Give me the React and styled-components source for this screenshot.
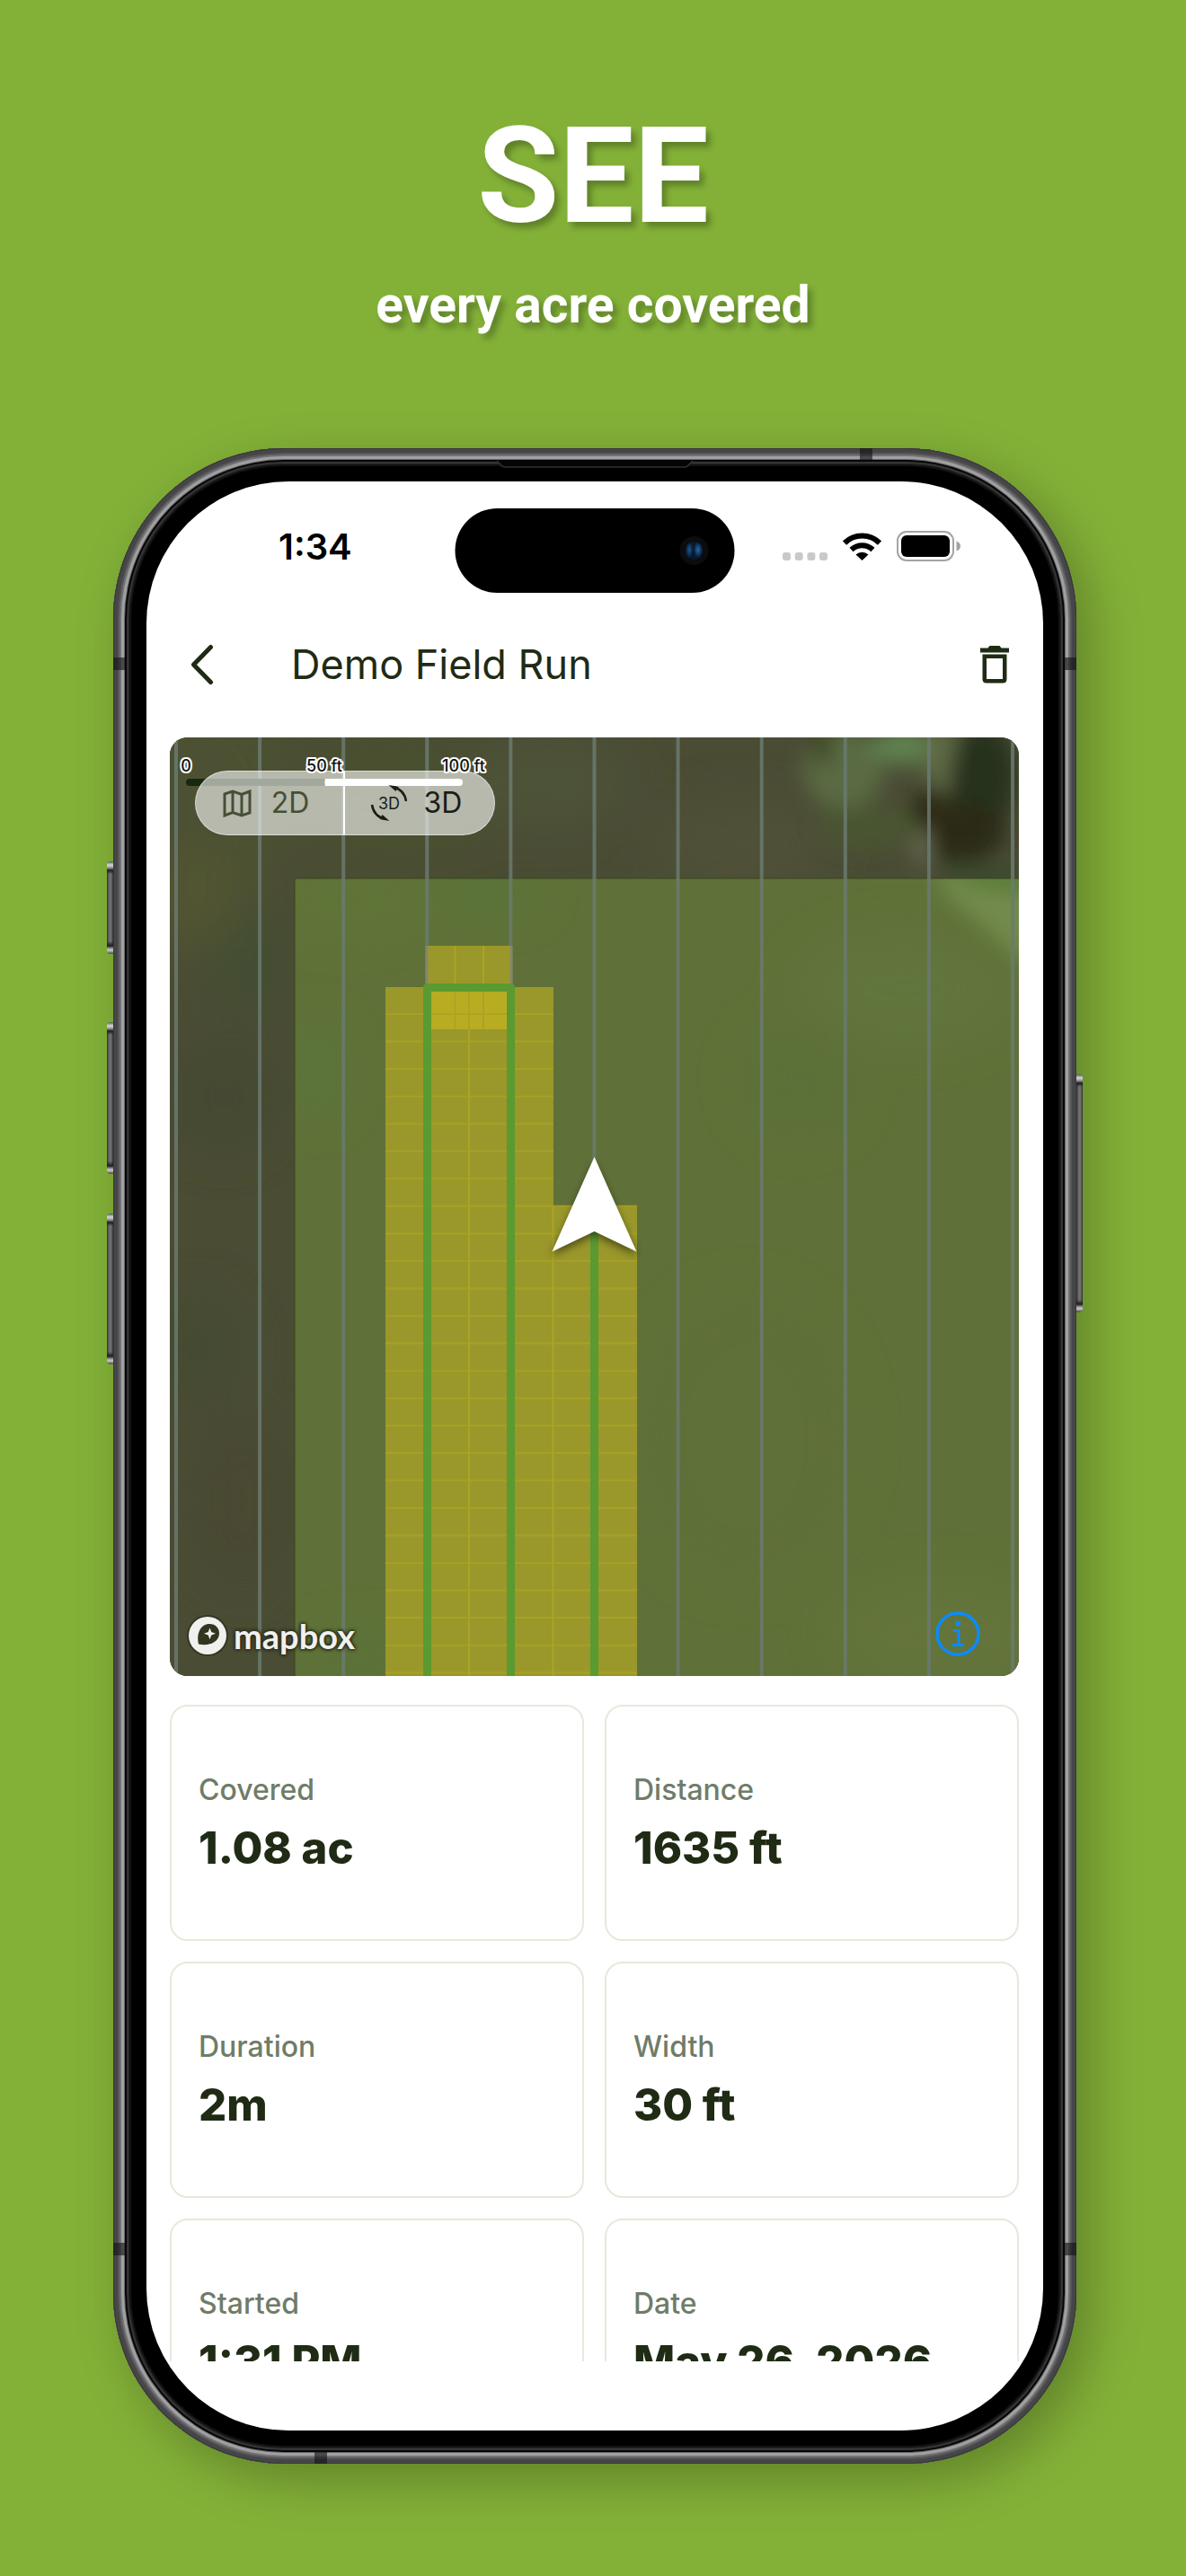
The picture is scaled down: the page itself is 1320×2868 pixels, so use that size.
import React from 'react';
import styled, { createGlobalStyle } from 'styled-components';

const INK = '#1f2b14';
const UI_FONT = "Inter, 'Liberation Sans', sans-serif";

const GlobalStyle = createGlobalStyle`
  *, *::before, *::after { box-sizing: border-box; }
  body { margin: 0; background: #83b138; }
  button { font: inherit; color: inherit; border: 0; padding: 0; background: none; cursor: pointer; }
  svg { display: block; }
`;

const Page = styled.main`
  min-height: 100vh;
  display: flex;
  flex-direction: column;
  background: #83b138;
  overflow: hidden;
  font-family: ${UI_FONT};
`;

const Hero = styled.header`
  padding: 111px 24px 124px;
  text-align: center;
  color: #fff;
  font-family: Roboto, 'Liberation Sans', sans-serif;
  font-weight: 700;
  text-shadow: 5px 6px 7px rgba(0, 0, 0, 0.28);
`;

const HeroTitle = styled.h1`
  margin: 0;
  font-size: 148px;
  line-height: 172px;
  font-weight: 700;
`;

const HeroText = styled.p`
  margin: 21px 0 0;
  font-size: 57px;
  line-height: 71px;
`;

const Stage = styled.div`
  padding: 0 122px 125px 126px;
`;

const Phone = styled.div`
  position: relative;
  width: 100%;
  max-width: 1072px;
  aspect-ratio: 1072 / 2244;
  margin: 0 auto;
  padding: 37px;
  border-radius: 190px;
  background: #000;
  box-shadow:
    inset 0 0 0 1px #38383a,
    inset 0 0 0 5px #464648,
    inset 0 0 0 7px #575759,
    inset 0 0 0 9px #737375,
    inset 0 0 0 12px #a0a0a2,
    inset 0 0 0 13px #6a6a6c,
    inset 0 0 0 15px #060606,
    inset 0 0 0 17px #343434,
    inset 0 0 0 18px #242424,
    inset 0 0 0 20px #121212,
    16px 18px 56px rgba(0, 0, 0, 0.26);
`;

const SideKey = styled.span`
  position: absolute;
  ${(p) => (p.$side === 'left' ? 'left: -7px; border-radius: 4px 0 0 4px;' : 'right: -7px; border-radius: 0 4px 4px 0;')}
  top: ${(p) => p.$top}px;
  width: 7px;
  height: ${(p) => p.$length}px;
  background:
    linear-gradient(#555 0, #d8d8d8 4px, #999 7px, #1c1c1e 10px, transparent 14px, transparent calc(100% - 14px), #1c1c1e calc(100% - 9px), #999 calc(100% - 6px), #ccc calc(100% - 4px), #444 100%),
    linear-gradient(90deg, #333 0, #737375 3px, #6a6a6c 5px, #2c2c2e 7px);
`;

const Band = styled.span`
  position: absolute;
  background: rgba(20, 20, 22, 0.62);
  ${(p) => p.$edge}: 0;
  ${(p) => (p.$edge === 'top' || p.$edge === 'bottom'
    ? `left: ${p.$at}px; width: 14px; height: 13px;`
    : `top: ${p.$at}px; width: 13px; height: 14px;`)}
`;

const Earpiece = styled.svg`
  position: absolute;
  top: 13px;
  left: 50%;
  transform: translateX(-50%);
`;

const Screen = styled.div`
  position: relative;
  height: 100%;
  display: flex;
  flex-direction: column;
  overflow: hidden;
  border-radius: 158px;
  background: #fff;
  color: ${INK};
`;

const Island = styled.div`
  position: absolute;
  top: 30px;
  left: 50%;
  transform: translateX(-50%);
  width: 311px;
  height: 94px;
  display: flex;
  align-items: center;
  justify-content: flex-end;
  padding-right: 29px;
  border-radius: 47px;
  background: #000;
`;

const Lens = styled.span`
  width: 32px;
  height: 32px;
  border: 6px solid #0c0c0e;
  border-radius: 50%;
  background: radial-gradient(ellipse 5px 9px at 72% 45%, #1f6cab, transparent),
    radial-gradient(ellipse 4px 9px at 24% 45%, #1a5a94, transparent), #08182f;
`;

const StatusBar = styled.div`
  flex: none;
  height: 146px;
  display: flex;
  align-items: center;
  justify-content: space-between;
  padding: 0 92px 0 147px;
  color: #000;
`;

const Clock = styled.time`
  font-size: 40px;
  line-height: 48px;
  font-weight: 600;
`;

const StatusIcons = styled.div`
  display: flex;
  align-items: center;
  gap: 17px;
  padding-bottom: 2px;
`;

const NavBar = styled.div`
  flex: none;
  height: 115px;
  display: flex;
  align-items: center;
  padding: 0 30px 0 38px;
`;

const IconButton = styled.button`
  width: 48px;
  height: 48px;
  display: grid;
  place-items: center;
`;

const NavTitle = styled.h2`
  flex: 1;
  margin: 0 0 0 75px;
  font-size: 45px;
  line-height: 58px;
  font-weight: 400;
`;

const Scroll = styled.div`
  flex: 1;
  min-height: 0;
  overflow: hidden;
  margin-bottom: 77px;
  padding: 24px 27px 0 26px;
`;

const MapBox = styled.section`
  position: relative;
  aspect-ratio: 945 / 1045;
  overflow: hidden;
  border-radius: 20px;
  background: #4b4d34;
`;

const MapArt = styled.svg`
  width: 100%;
  height: 100%;
`;

const ViewToggle = styled.div`
  position: absolute;
  top: 37px;
  left: 28px;
  display: grid;
  grid-template-columns: 1fr 1fr;
  width: 334px;
  height: 72px;
  border: 1px solid rgba(255, 255, 255, 0.5);
  border-radius: 36px;
  background: rgba(255, 255, 255, 0.6);
`;

const ToggleButton = styled.button`
  display: flex;
  align-items: center;
  justify-content: center;
  gap: ${(p) => (p.$divided ? 22 : 18)}px;
  padding-right: 8px;
  font-size: 32px;
  line-height: 40px;
  color: ${(p) => (p.$divided ? '#454f35' : '#1b1c17')};
  border-right: ${(p) => (p.$divided ? '2px solid #fff' : '0')};
`;

const Attribution = styled.a`
  position: absolute;
  left: 18px;
  bottom: 21px;
  display: flex;
  align-items: center;
  gap: 5px;
  color: #f0f0ee;
  font: 700 38px/44px Lato, 'Liberation Sans', sans-serif;
  text-decoration: none;
  text-shadow: 0 0 3px #2c2f1c, 0 0 3px #2c2f1c, 0 0 4px #2c2f1c, 0 0 4px #2c2f1c;
`;

const InfoButton = styled.button`
  position: absolute;
  right: 43px;
  bottom: 22px;
`;

const Stats = styled.dl`
  display: grid;
  grid-template-columns: 1fr 1fr;
  grid-auto-rows: 263px;
  gap: 23px;
  margin: 32px 0 0;
`;

const Card = styled.div`
  display: flex;
  flex-direction: column;
  justify-content: center;
  gap: 12px;
  padding: 0 30px 4px;
  border: 2px solid #e4eadc;
  border-radius: 20px;
`;

const Label = styled.dt`
  font-size: 32px;
  line-height: 48px;
  font-weight: 500;
  color: #6f7c68;
`;

const Value = styled.dd`
  margin: 0;
  font-size: 49px;
  line-height: 58px;
  font-weight: 800;
  white-space: nowrap;
`;

const LINES = Array.from({ length: 11 }, (_, i) => 7 + i * 93.1);
const ROWS = Array.from({ length: 25 }, (_, i) => 308 + i * 30.55);

const stats = [
  ['Covered', '1.08 ac'],
  ['Distance', '1635 ft'],
  ['Duration', '2m'],
  ['Width', '30 ft'],
  ['Started', '1:31 PM'],
  ['Date', 'May 26, 2026'],
];

function FieldMap() {
  return (
    <MapArt viewBox="0 0 945 1045" preserveAspectRatio="xMidYMid slice" role="img" aria-label="Field coverage map">
      <defs>
        <filter id="soft" x="-50%" y="-50%" width="200%" height="200%"><feGaussianBlur stdDeviation="26" /></filter>
        <filter id="leaf" x="-50%" y="-50%" width="200%" height="200%"><feGaussianBlur stdDeviation="11" /></filter>
        <filter id="drop" x="-50%" y="-50%" width="200%" height="200%"><feGaussianBlur stdDeviation="5" /></filter>
        <clipPath id="beyond"><path d="M0 0H945V157H139V1045H0Z" /></clipPath>
        <clipPath id="field"><rect x="139" y="157" width="806" height="888" /></clipPath>
      </defs>

      <g clipPath="url(#beyond)">
        <rect width="945" height="1045" fill="#4a4c34" />
        <g filter="url(#soft)">
          <ellipse cx="30" cy="60" rx="110" ry="120" fill="#4b5130" />
          <ellipse cx="30" cy="180" rx="60" ry="60" fill="#515433" />
          <ellipse cx="250" cy="70" rx="120" ry="60" fill="#4a512f" />
          <ellipse cx="90" cy="250" rx="40" ry="60" fill="#434d33" />
          <ellipse cx="420" cy="50" rx="90" ry="50" fill="#4e5238" />
          <ellipse cx="640" cy="120" rx="100" ry="50" fill="#505138" />
          <ellipse cx="60" cy="400" rx="60" ry="60" fill="#454830" />
          <ellipse cx="30" cy="680" rx="50" ry="60" fill="#454b32" />
          <ellipse cx="80" cy="850" rx="60" ry="100" fill="#494a33" />
        </g>
        <g filter="url(#leaf)">
          <ellipse cx="750" cy="35" rx="45" ry="45" fill="#5a6b42" />
          <ellipse cx="820" cy="10" rx="40" ry="20" fill="#5f8250" />
          <ellipse cx="780" cy="100" rx="60" ry="25" fill="#485432" />
          <ellipse cx="727" cy="10" rx="10" ry="22" fill="#3b4424" />
          <ellipse cx="858" cy="20" rx="20" ry="36" fill="#5f6a44" />
          <ellipse cx="905" cy="45" rx="36" ry="60" fill="#27301a" />
          <ellipse cx="880" cy="105" rx="50" ry="34" fill="#2a2b19" />
          <ellipse cx="845" cy="80" rx="20" ry="22" fill="#2e2a17" />
          <ellipse cx="838" cy="122" rx="10" ry="22" fill="#66684f" />
          <ellipse cx="905" cy="152" rx="46" ry="10" fill="#39482b" />
        </g>
      </g>

      <g clipPath="url(#field)">
        <rect x="139" y="157" width="806" height="888" fill="#5f7138" />
        <g filter="url(#soft)">
          <ellipse cx="200" cy="180" rx="90" ry="30" fill="#617537" />
          <ellipse cx="160" cy="370" rx="30" ry="50" fill="#5a743a" />
          <ellipse cx="350" cy="170" rx="60" ry="20" fill="#597337" />
          <ellipse cx="700" cy="380" rx="60" ry="60" fill="#5b7038" />
          <ellipse cx="820" cy="280" rx="120" ry="60" fill="#62743c" />
          <ellipse cx="640" cy="780" rx="120" ry="160" fill="#5e7037" />
          <ellipse cx="860" cy="1000" rx="120" ry="60" fill="#64743b" />
          <ellipse cx="210" cy="1020" rx="60" ry="20" fill="#597238" />
        </g>
        <path filter="url(#leaf)" d="M850 150H960V260Q925 230 900 205Q865 185 850 150Z" fill="#728a4c" />
        <path filter="url(#leaf)" d="M880 150H960V172Q920 170 880 160Z" fill="#577936" />
      </g>
      <path d="M139 1045V157H945" fill="none" stroke="#38461f" strokeWidth="1" />

      <g fill="#6a7a70">
        {LINES.map((x) => <rect key={x} x={x - 2} width="4" height="1045" opacity="0.85" />)}
      </g>

      <g fill="#9a982b">
        <rect x="286" y="232" width="94" height="47" />
        <path d="M240 278H427V522H520V1045H240Z" />
      </g>
      <rect x="286" y="278" width="94" height="47" fill="#b8ac22" />
      <g stroke="#aca325" strokeWidth="2">
        <path d="M317.5 232V325M349 232V325M333 278V1045M426.500 522V1045" />
        {ROWS.map((y) => <path key={y} d={`M240 ${y}H${y < 520 ? 427 : 520}`} opacity="0.8" />)}
      </g>
      <path d="M286 232V275M380 232V275" stroke="#85876a" strokeWidth="3" />
      <g fill="none" stroke="#5a9a30" strokeWidth="9" strokeLinejoin="round">
        <path d="M286.500 1045V278.500H379.500V1045" />
        <path d="M472.500 545V1045" />
      </g>

      <g strokeLinecap="round" strokeWidth="8">
        <path d="M22 50H172" stroke="#16290f" />
        <path d="M176 50H322" stroke="#fff" />
        <path d="M172.500 50H180" stroke="#fff" strokeLinecap="butt" />
        <path d="M160 50H172.500" stroke="#16290f" strokeLinecap="butt" />
      </g>

      <path d="M472.500 474L520 577L472.500 554L425 577Z" fill="#000" opacity="0.5" filter="url(#drop)" />
      <path d="M472.500 467L519.500 572.500L472.500 550L425.500 572.500Z" fill="#fff" />
    </MapArt>
  );
}

const ScaleLabels = styled.svg`
  position: absolute;
  top: 0;
  left: 0;
  font: 500 18px Inter, 'Liberation Sans', sans-serif;
  fill: #111;
  stroke: #fff;
  stroke-width: 4px;
  stroke-linejoin: round;
  paint-order: stroke;
  text-anchor: middle;
`;

const RotationText = styled.text`
  font: 400 18px Inter, 'Liberation Sans', sans-serif;
  fill: currentColor;
  text-anchor: middle;
`;

export default function App() {
  return (
    <>
      <GlobalStyle />
      <Page>
        <Hero>
          <HeroTitle>SEE</HeroTitle>
          <HeroText>every acre covered</HeroText>
        </Hero>
        <Stage>
          <Phone>
            <SideKey $side="left" $top={460} $length={103} />
            <SideKey $side="left" $top={639} $length={169} />
            <SideKey $side="left" $top={852} $length={168} />
            <SideKey $side="right" $top={697} $length={265} />
            <Band $edge="top" $at={831} />
            <Band $edge="bottom" $at={224} />
            <Band $edge="left" $at={233} />
            <Band $edge="right" $at={233} />
            <Band $edge="left" $at={1998} />
            <Band $edge="right" $at={1998} />
            <Earpiece width="218" height="9" viewBox="0 0 218 9" aria-hidden="true">
              <path d="M0 1L3 4Q6 8 9 8H209Q212 8 215 4L218 1" fill="#050505" stroke="#303030" strokeWidth="1.500" />
            </Earpiece>
            <Screen>
              <Island><Lens /></Island>
              <StatusBar>
                <Clock>1:34</Clock>
                <StatusIcons>
                  <svg width="50" height="32" viewBox="0 0 50 32" fill="#c9c9c9" aria-hidden="true">
                    {[0, 13.700, 27.400, 41].map((x) => <rect key={x} x={x} y="23" width="9" height="9" rx="3" />)}
                  </svg>
                  <svg width="43" height="32" viewBox="0 0 43 32" aria-label="Wi-Fi" role="img">
                    <g fill="none" stroke="#000" strokeWidth="6">
                      <path d="M2 12.500A28 28 0 0 1 41 12.500" />
                      <path d="M9.500 20A17.500 17.500 0 0 1 33.500 20" />
                    </g>
                    <path d="M14.500 25.500A10.500 10.500 0 0 1 28.500 25.500L21.500 32Z" />
                  </svg>
                  <svg width="71" height="34" viewBox="0 0 71 34" aria-label="Battery full" role="img">
                    <rect x="1" y="1" width="62" height="32" rx="10" fill="none" stroke="#a4a4a4" strokeWidth="2" />
                    <rect x="5" y="5" width="54" height="24" rx="6" />
                    <path d="M66.500 11.500Q71 13 71 17T66.500 22.500Z" fill="#a4a4a4" />
                  </svg>
                </StatusIcons>
              </StatusBar>

              <NavBar>
                <IconButton aria-label="Back">
                  <svg width="26" height="46" viewBox="0 0 26 46" fill="none" stroke={INK} strokeWidth="5" strokeLinecap="round" strokeLinejoin="round">
                    <path d="M22.500 3.500L3.500 23L22.500 42.500" />
                  </svg>
                </IconButton>
                <NavTitle>Demo Field Run</NavTitle>
                <IconButton aria-label="Delete run">
                  <svg width="32" height="42" viewBox="0 0 32 42" fill={INK}>
                    <path d="M0 2.500H8.500L10.500 0H21.500L23.500 2.500H32V7.500H0Z" />
                    <path fillRule="evenodd" d="M2.500 9.500H29.500V37Q29.500 41.500 25 41.500H7Q2.500 41.500 2.500 37ZM7 14V37H25V14Z" />
                  </svg>
                </IconButton>
              </NavBar>

              <Scroll>
                <MapBox>
                  <FieldMap />
                  <ViewToggle role="group" aria-label="Map view">
                    <ToggleButton $divided aria-pressed="false">
                      <svg width="32" height="31" viewBox="0 0 32 31" fill="none" stroke="currentColor" strokeWidth="3" strokeLinejoin="miter" aria-hidden="true">
                        <path d="M2 5L11 2L21 5.500L30 2V26L21 29L11 25.500L2 29ZM11 2V25.500M21 5.500V29" />
                      </svg>
                      2D
                    </ToggleButton>
                    <ToggleButton aria-pressed="true">
                      <svg width="42" height="42" viewBox="0 0 42 42" aria-hidden="true">
                        <g fill="none" stroke="currentColor" strokeWidth="2.500">
                          <path d="M25 3Q38 6 40 19" />
                          <path d="M2 23Q4 36 17 39" />
                        </g>
                        <path d="M20.500 1L31.500 3L28.500 8Z" fill="currentColor" />
                        <path d="M21.500 41L10.500 39L13.500 34Z" fill="currentColor" />
                        <RotationText x="21" y="28">3D</RotationText>
                      </svg>
                      3D
                    </ToggleButton>
                  </ViewToggle>
                  <ScaleLabels width="380" height="48" viewBox="0 0 380 48">
                    <text x="18" y="38">0</text>
                    <text x="172" y="38">50 ft</text>
                    <text x="327" y="38">100 ft</text>
                  </ScaleLabels>
                  <Attribution href="#mapbox">
                    <svg width="48" height="48" viewBox="0 0 48 48" aria-hidden="true">
                      <circle cx="24" cy="24" r="23" fill="#2c2f1c" opacity="0.7" />
                      <circle cx="24" cy="24" r="21" fill="#f0f0ee" />
                      <path d="M14 33.500C11 21 17 11 26 11C33 11 37 16 37 21.500C37 31 26 36 14 33.500Z" fill="#33361f" />
                      <path d="M26.500 15.500L28.300 20L33 21.800L28.300 23.600L26.500 28.300L24.700 23.600L20 21.800L24.700 20Z" fill="#f0f0ee" />
                    </svg>
                    mapbox
                  </Attribution>
                  <InfoButton aria-label="Map attribution">
                    <svg width="50" height="50" viewBox="0 0 50 50" fill="none" stroke="#0a8bfb" aria-hidden="true">
                      <circle cx="25" cy="25" r="23" strokeWidth="3.500" />
                      <path d="M20 21.500H26V37M18.500 37.500H32" strokeWidth="3" />
                      <circle cx="25" cy="13.500" r="3" fill="#0a8bfb" stroke="none" />
                    </svg>
                  </InfoButton>
                </MapBox>
                <Stats>
                  {stats.map(([label, value]) => (
                    <Card key={label}>
                      <Label>{label}</Label>
                      <Value>{value}</Value>
                    </Card>
                  ))}
                </Stats>
              </Scroll>
            </Screen>
          </Phone>
        </Stage>
      </Page>
    </>
  );
}
